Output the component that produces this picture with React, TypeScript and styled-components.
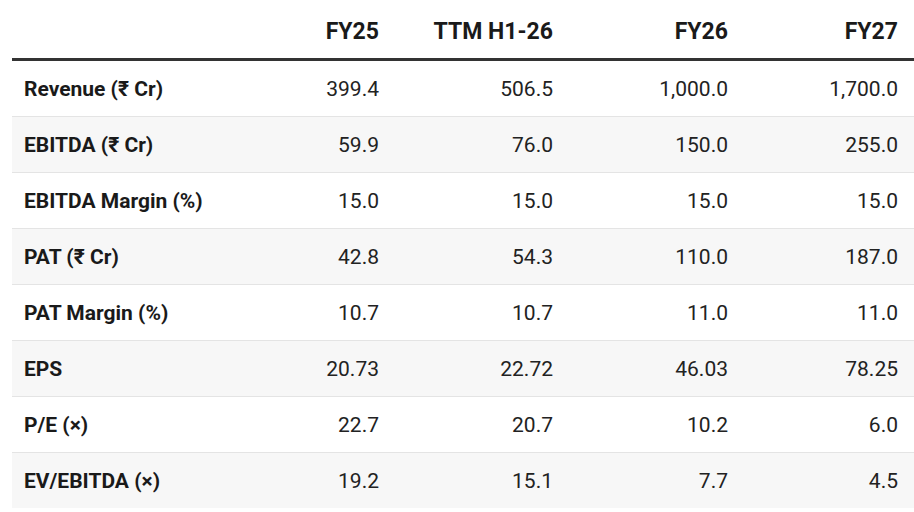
import React from 'react';
import styled, { createGlobalStyle } from 'styled-components';

type Row = {
  label: string;
  values: string[];
};

const columns = ['FY25', 'TTM H1-26', 'FY26', 'FY27'];
const colWidths = [205, 174, 174, 175, 174];

const rows: Row[] = [
  { label: 'Revenue (₹ Cr)', values: ['399.4', '506.5', '1,000.0', '1,700.0'] },
  { label: 'EBITDA (₹ Cr)', values: ['59.9', '76.0', '150.0', '255.0'] },
  { label: 'EBITDA Margin (%)', values: ['15.0', '15.0', '15.0', '15.0'] },
  { label: 'PAT (₹ Cr)', values: ['42.8', '54.3', '110.0', '187.0'] },
  { label: 'PAT Margin (%)', values: ['10.7', '10.7', '11.0', '11.0'] },
  { label: 'EPS', values: ['20.73', '22.72', '46.03', '78.25'] },
  { label: 'P/E (×)', values: ['22.7', '20.7', '10.2', '6.0'] },
  { label: 'EV/EBITDA (×)', values: ['19.2', '15.1', '7.7', '4.5'] },
];

const App = (): React.ReactElement => {
  return (
    <>
      <GlobalStyle />
      <Wrapper>
        <Table>
          <colgroup>
            {colWidths.map((w, i) => (
              <Col key={i} $width={w} />
            ))}
          </colgroup>
          <thead>
            <tr>
              <HeadCell />
              {columns.map(c => (
                <HeadCell key={c} $numeric>
                  {c}
                </HeadCell>
              ))}
            </tr>
          </thead>
          <tbody>
            {rows.map((r, i) => (
              <BodyRow key={r.label} $shaded={i % 2 === 1}>
                <LabelCell>{r.label}</LabelCell>
                {r.values.map((v, j) => (
                  <ValueCell key={j}>{v}</ValueCell>
                ))}
              </BodyRow>
            ))}
          </tbody>
        </Table>
      </Wrapper>
    </>
  );
};

const GlobalStyle = createGlobalStyle`
  html, body {
    margin: 0;
    padding: 0;
    background: #fff;
    overflow: hidden;
  }
  body {
    font-family: Roboto, 'Liberation Sans', sans-serif;
    color: #1f1f1f;
  }
`;

const Wrapper = styled.div`
  padding-left: 12px;
  width: 902px;
`;

const Table = styled.table`
  width: 902px;
  table-layout: fixed;
  border-collapse: collapse;
  font-size: 21px;
  line-height: 24px;
`;

const Col = styled.col<{ $width: number }>`
  width: ${p => p.$width}px;
`;

const HeadCell = styled.th<{ $numeric?: boolean }>`
  text-align: ${p => (p.$numeric ? 'right' : 'left')};
  font-size: 23px;
  font-weight: 700;
  color: #1a1a1a;
  padding: 20px 12px 14px;
  border-bottom: 3px solid #333;
  white-space: nowrap;
  &:last-child {
    padding-right: 16px;
  }
`;

const BodyRow = styled.tr<{ $shaded: boolean }>`
  background: ${p => (p.$shaded ? '#f7f7f7' : '#fff')};
  border-bottom: 1px solid #e4e4e4;
  &:last-child {
    border-bottom: none;
  }
`;

const LabelCell = styled.td`
  font-weight: 700;
  color: #1a1a1a;
  padding: 16px 12px 15px;
  white-space: nowrap;
`;

const ValueCell = styled.td`
  text-align: right;
  color: #222;
  padding: 16px 12px 15px;
  white-space: nowrap;
  &:last-child {
    padding-right: 16px;
  }
`;

export default App;
